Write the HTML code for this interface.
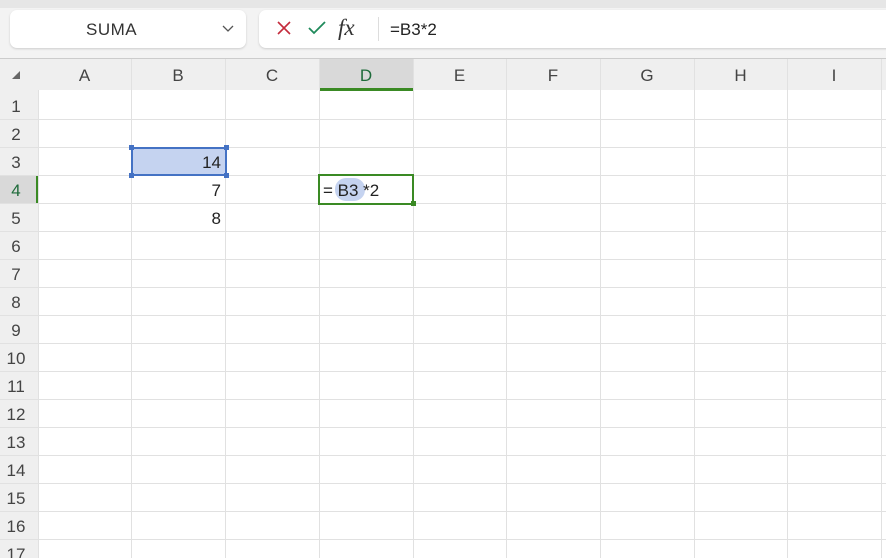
<!DOCTYPE html>
<html><head><style>
*{margin:0;padding:0;box-sizing:border-box}
html,body{width:886px;height:558px;overflow:hidden}
body{background:#fff;font-family:"Liberation Sans",sans-serif;position:relative}
.a{position:absolute}
.vl{position:absolute;top:59px;width:1px;height:500px;background:#e1e1e1}
.hl{position:absolute;left:0;height:1px;width:886px;background:#e1e1e1}
.ch{position:absolute;top:59px;height:31px;line-height:34px;text-align:center;font-size:17px;color:#444}
.rh{position:absolute;left:0;width:32px;height:28px;line-height:31px;text-align:center;font-size:17px;color:#444}
.n{position:absolute;font-size:17px;color:#222;text-align:right;width:90px}
</style></head><body>
<div class="a" style="left:0;top:0;width:886px;height:58px;background:#f3f3f3;border-top:8px solid #e6e6e6"></div>
<div class="a" style="left:10px;top:10px;width:236px;height:38px;background:#fff;border-radius:7px;box-shadow:0 1px 2px #ccc"></div>
<div class="a" style="left:86px;top:20px;font-size:17px;color:#333;letter-spacing:.5px">SUMA</div>
<svg class="a" style="left:222px;top:24px" width="12" height="10"><path d="M1 2 L6 7 L11 2" fill="none" stroke="#555" stroke-width="1.3"/></svg>
<div class="a" style="left:259px;top:10px;width:640px;height:38px;background:#fff;border-radius:7px;box-shadow:0 1px 2px #ccc"></div>
<svg class="a" style="left:277px;top:21px" width="14" height="14"><path d="M1 1 L13 13 M13 1 L1 13" stroke="#c42b3c" stroke-width="1.6"/></svg>
<svg class="a" style="left:308px;top:20px" width="18" height="16"><path d="M1 8 L6 13 L17 2" fill="none" stroke="#1f8a5b" stroke-width="1.8"/></svg>
<div class="a" style="left:338px;top:15px;font-size:23px;font-style:italic;font-family:'Liberation Serif',serif;color:#333">fx</div>
<div class="a" style="left:378px;top:17px;width:1px;height:24px;background:#ddd"></div>
<div class="a" style="left:390px;top:20px;font-size:17px;color:#222">=B3*2</div>
<div class="a" style="left:0;top:58px;width:886px;height:32px;background:#efefef;border-top:1px solid #ccc"></div>
<div class="a" style="left:0;top:90px;width:38px;height:468px;background:#efefef"></div>
<div class="a" style="left:319px;top:59px;width:94px;height:31px;background:#d9d9d9"></div>
<div class="a" style="left:319px;top:88px;width:94px;height:3px;background:#3a8a24"></div>
<div class="a" style="left:0;top:175px;width:38px;height:28px;background:#d9d9d9"></div>
<div class="a" style="left:36px;top:175px;width:3px;height:28px;background:#3a8a24"></div>
<svg class="a" style="left:11px;top:70px" width="10" height="10"><path d="M9 1 L9 9 L1 9Z" fill="#666"/></svg>
<div class="vl" style="left:38px;top:90px;height:468px"></div>
<div class="vl" style="left:131px"></div><div class="vl" style="left:225px"></div><div class="vl" style="left:319px"></div><div class="vl" style="left:413px"></div><div class="vl" style="left:506px"></div><div class="vl" style="left:600px"></div><div class="vl" style="left:694px"></div><div class="vl" style="left:787px"></div><div class="vl" style="left:881px"></div>
<div class="hl" style="top:119px"></div><div class="hl" style="top:147px"></div><div class="hl" style="top:175px"></div><div class="hl" style="top:203px"></div><div class="hl" style="top:231px"></div><div class="hl" style="top:259px"></div><div class="hl" style="top:287px"></div><div class="hl" style="top:315px"></div><div class="hl" style="top:343px"></div><div class="hl" style="top:371px"></div><div class="hl" style="top:399px"></div><div class="hl" style="top:427px"></div><div class="hl" style="top:455px"></div><div class="hl" style="top:483px"></div><div class="hl" style="top:511px"></div><div class="hl" style="top:539px"></div>
<div class="ch" style="left:38px;width:93px">A</div><div class="ch" style="left:131px;width:94px">B</div><div class="ch" style="left:225px;width:94px">C</div><div class="ch" style="left:319px;width:94px;color:#1e6b3a">D</div><div class="ch" style="left:413px;width:93px">E</div><div class="ch" style="left:506px;width:94px">F</div><div class="ch" style="left:600px;width:94px">G</div><div class="ch" style="left:694px;width:93px">H</div><div class="ch" style="left:787px;width:94px">I</div>
<div class="rh" style="top:91px">1</div><div class="rh" style="top:119px">2</div><div class="rh" style="top:147px">3</div><div class="rh" style="top:175px;color:#1e6b3a">4</div><div class="rh" style="top:203px">5</div><div class="rh" style="top:231px">6</div><div class="rh" style="top:259px">7</div><div class="rh" style="top:287px">8</div><div class="rh" style="top:315px">9</div><div class="rh" style="top:343px">10</div><div class="rh" style="top:371px">11</div><div class="rh" style="top:399px">12</div><div class="rh" style="top:427px">13</div><div class="rh" style="top:455px">14</div><div class="rh" style="top:483px">15</div><div class="rh" style="top:511px">16</div><div class="rh" style="top:539px">17</div>
<div class="a" style="left:131px;top:147px;width:96px;height:29px;background:#c5d3f0;border:2px solid #4472c4"></div>
<div class="a" style="left:129px;top:145px;width:5px;height:5px;background:#4472c4"></div>
<div class="a" style="left:224px;top:145px;width:5px;height:5px;background:#4472c4"></div>
<div class="a" style="left:129px;top:173px;width:5px;height:5px;background:#4472c4"></div>
<div class="a" style="left:224px;top:173px;width:5px;height:5px;background:#4472c4"></div>
<div class="n" style="left:131px;top:153px">14</div>
<div class="n" style="left:131px;top:181px">7</div>
<div class="n" style="left:131px;top:209px">8</div>
<div class="a" style="left:318px;top:174px;width:96px;height:31px;border:2px solid #3a8a24;background:#fff"></div>
<div class="a" style="left:411px;top:201px;width:5px;height:5px;background:#3a8a24"></div>
<div class="a" style="left:335px;top:178px;width:30px;height:23px;background:#c5d3f0;border-radius:11px"></div>
<div class="a" style="left:323px;top:181px;font-size:17px;color:#222;white-space:pre">= B3 *2</div>
</body></html>
